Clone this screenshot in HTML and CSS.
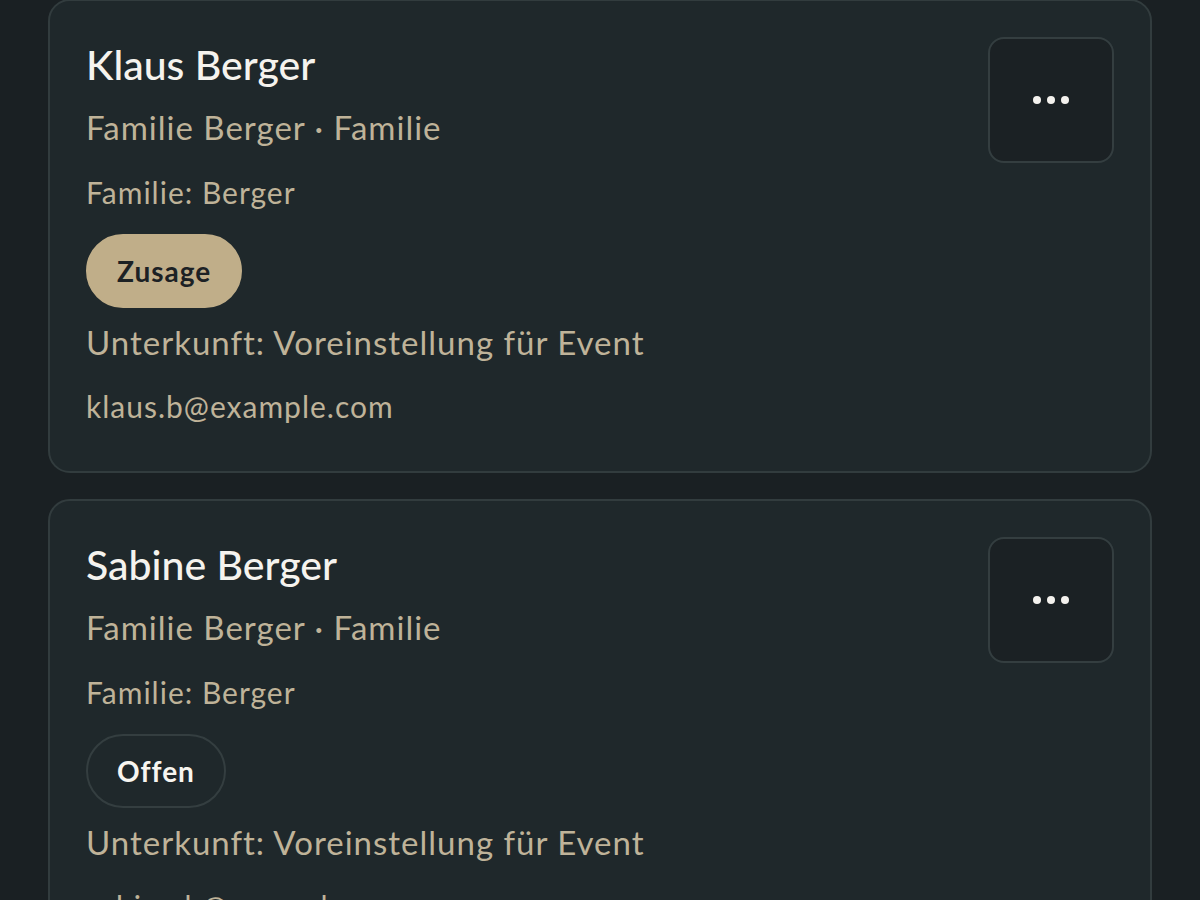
FILE: index.html
```html
<!DOCTYPE html>
<html lang="de">
<head>
<meta charset="utf-8">
<title>Gäste</title>
<link rel="stylesheet" href="styles.css">
</head>
<body>
<main class="list">
  <article class="card">
    <div class="card-body">
      <h2 class="name">Klaus Berger</h2>
      <p class="sub">Familie Berger · Familie</p>
      <p class="meta">Familie: Berger</p>
      <span class="badge badge-yes">Zusage</span>
      <p class="sub stay">Unterkunft: Voreinstellung für Event</p>
      <p class="meta mail">klaus.b@example.com</p>
    </div>
    <button class="more" aria-label="Mehr">
      <svg width="36" height="10" viewBox="0 0 36 10"><circle cx="4" cy="5" r="4" fill="#f4f2ee"/><circle cx="18" cy="5" r="4" fill="#f4f2ee"/><circle cx="32" cy="5" r="4" fill="#f4f2ee"/></svg>
    </button>
  </article>
  <article class="card">
    <div class="card-body">
      <h2 class="name">Sabine Berger</h2>
      <p class="sub">Familie Berger · Familie</p>
      <p class="meta">Familie: Berger</p>
      <span class="badge badge-open">Offen</span>
      <p class="sub stay">Unterkunft: Voreinstellung für Event</p>
      <p class="meta mail">sabine.b@example.com</p>
    </div>
    <button class="more" aria-label="Mehr">
      <svg width="36" height="10" viewBox="0 0 36 10"><circle cx="4" cy="5" r="4" fill="#f4f2ee"/><circle cx="18" cy="5" r="4" fill="#f4f2ee"/><circle cx="32" cy="5" r="4" fill="#f4f2ee"/></svg>
    </button>
  </article>
</main>
</body>
</html>
```
FILE: styles.css
```css
html, body {
  margin: 0;
  padding: 0;
  background: #1a2023;
  font-family: Lato, "Noto Sans", sans-serif;
  overflow: hidden;
}
.list {
  display: flex;
  flex-direction: column;
  gap: 26px;
  margin: -1px 48px 0;
}
.card {
  display: flex;
  justify-content: space-between;
  align-items: flex-start;
  background: #1f282b;
  border: 2px solid #323c3e;
  border-radius: 22px;
  padding: 36px 36px 44px;
}
.card-body {
  display: flex;
  flex-direction: column;
  align-items: flex-start;
}
.name {
  margin: 0;
  font-size: 41px;
  line-height: 56px;
  font-weight: 500;
  color: #f5f3ee;
}
.sub {
  margin: 11px 0 0;
  font-size: 33px;
  line-height: 46px;
  letter-spacing: 1px;
  color: #bfb399;
}
.meta {
  margin: 21px 0 0;
  font-size: 30px;
  line-height: 42px;
  letter-spacing: 1px;
  color: #bfb399;
}
.badge {
  margin-top: 21px;
  height: 74px;
  box-sizing: border-box;
  padding: 0 29px;
  border-radius: 37px;
  border: 2px solid transparent;
  font-size: 28px;
  font-weight: 700;
  line-height: 70px;
  letter-spacing: 1px;
}
.badge-yes {
  background: #c0ae89;
  border-color: #c0ae89;
  color: #1c2124;
}
.badge-open {
  background: transparent;
  border-color: #343e40;
  color: #f7f5f0;
}
.stay { margin-top: 11px; }
.mail { margin-top: 20px; }
.more {
  flex: none;
  width: 126px;
  height: 126px;
  display: flex;
  align-items: center;
  justify-content: center;
  background: #1b2124;
  border: 2px solid #343e40;
  border-radius: 16px;
  padding: 0;
}
```
